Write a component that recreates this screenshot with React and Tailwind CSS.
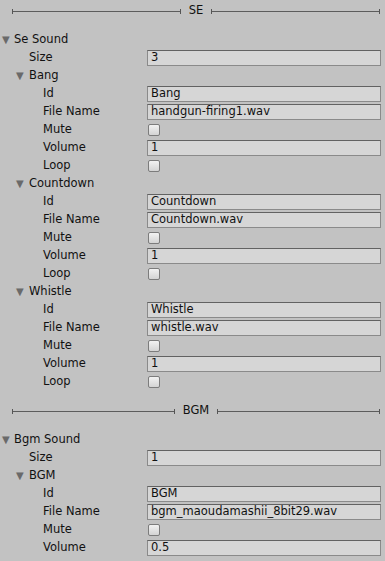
const font = { fontFamily: '"DejaVu Sans", Verdana, sans-serif' };

const sections = [
  {
    title: "SE",
    list: "Se Sound",
    items: [
      { name: "Bang", file: "handgun-firing1.wav", volume: "1", loop: true },
      { name: "Countdown", file: "Countdown.wav", volume: "1", loop: true },
      { name: "Whistle", file: "whistle.wav", volume: "1", loop: true },
    ],
  },
  {
    title: "BGM",
    list: "Bgm Sound",
    items: [
      { name: "BGM", file: "bgm_maoudamashii_8bit29.wav", volume: "0.5", loop: false },
    ],
  },
];

const indents = ["pl-[14px]", "pl-[29px]", "pl-[43px]"];

function Tick() {
  return <div className="h-[5px] w-px bg-[#555]" />;
}

function Divider({ title, first }) {
  return (
    <div
      className={`flex h-[40px] items-center gap-[8px] pl-[12px] pr-[5px] ${
        first ? "-mt-[9px]" : ""
      }`}
    >
      <div className="flex flex-1 items-center">
        <Tick />
        <div className="h-px flex-1 bg-[#5c5c5c]" />
        <Tick />
      </div>
      <span className="text-[11.5px] text-[#111]">{title}</span>
      <div className="flex flex-1 items-center">
        <Tick />
        <div className="h-px flex-1 bg-[#5c5c5c]" />
        <Tick />
      </div>
    </div>
  );
}

function Foldout({ depth, label }) {
  return (
    <div className={`relative flex h-[18px] items-center ${indents[depth]}`}>
      <span
        className="absolute top-[3px] text-[10px] leading-[12px] text-[#6a6a6a]"
        style={{ left: depth * 14 + 2 }}
      >
        ▼
      </span>
      <span className="text-[11.5px] text-[#111]">{label}</span>
    </div>
  );
}

function Field({ depth, label, children }) {
  return (
    <div className="flex h-[18px] items-center">
      <div className={`w-[147px] shrink-0 text-[11.5px] text-[#111] ${indents[depth]}`}>
        {label}
      </div>
      <div className="flex h-full flex-1 items-center pr-[4px]">{children}</div>
    </div>
  );
}

function TextBox({ value }) {
  return (
    <div className="flex h-[16px] w-full items-center border border-[#8a8a8a] border-t-[#626262] bg-[#d6d6d6] pl-[3px] text-[11.5px] text-[#111]">
      {value}
    </div>
  );
}

function Check() {
  return (
    <div className="ml-[1px] h-[12px] w-[12px] rounded-[2px] border border-[#7c7c7c] bg-gradient-to-b from-[#f2f2f2] to-[#d4d4d4]" />
  );
}

export default function App() {
  return (
    <div className="h-[561px] w-[385px] overflow-hidden bg-[#c2c2c2]" style={font}>
      {sections.map((s, i) => (
        <div key={s.title}>
          <Divider title={s.title} first={i === 0} />
          <Foldout depth={0} label={s.list} />
          <Field depth={1} label="Size">
            <TextBox value={String(s.items.length)} />
          </Field>
          {s.items.map((it) => (
            <div key={it.name}>
              <Foldout depth={1} label={it.name} />
              <Field depth={2} label="Id">
                <TextBox value={it.name} />
              </Field>
              <Field depth={2} label="File Name">
                <TextBox value={it.file} />
              </Field>
              <Field depth={2} label="Mute">
                <Check />
              </Field>
              <Field depth={2} label="Volume">
                <TextBox value={it.volume} />
              </Field>
              {it.loop && (
                <Field depth={2} label="Loop">
                  <Check />
                </Field>
              )}
            </div>
          ))}
        </div>
      ))}
    </div>
  );
}
